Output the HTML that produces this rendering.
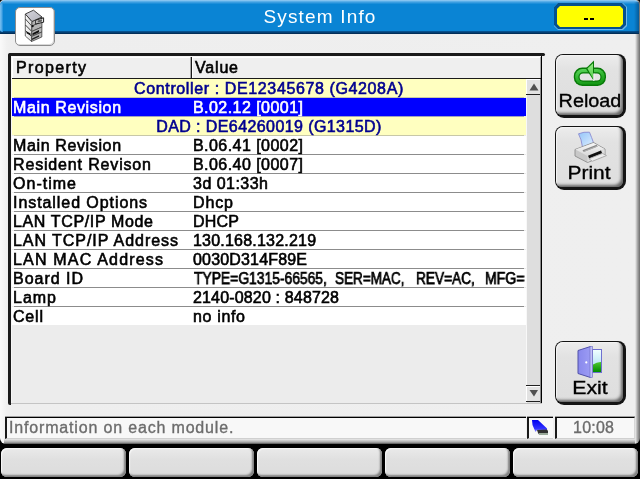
<!DOCTYPE html><html><head><meta charset="utf-8"><style>
*{margin:0;padding:0;box-sizing:border-box}
html,body{width:640px;height:479px;overflow:hidden;background:#000;font-family:"Liberation Sans",sans-serif}
div,span,svg{position:absolute}
.t{white-space:nowrap;-webkit-text-stroke:0.6px currentColor;will-change:transform}
</style></head><body>
<div style="left:0;top:0;width:640px;height:443px;background:#000"></div>
<div style="left:0;top:0;width:640px;height:444px;border-radius:4px 4px 6px 6px;background:linear-gradient(90deg,#fafafa 0,#f0f0f0 7px,#eeeeee 12px,#efefef 635px,#d4d4d4 636px,#a8a8a8 637.5px,#6c6c6c 640px)"></div>
<div style="left:4px;top:438px;width:631px;height:6px;background:linear-gradient(#f4f4f4,#e0e0e0 25%,#a8a8a8 70%,#505050)"></div>
<div style="left:0;top:0;width:639px;height:34px;border-radius:5px 5px 0 0;background:linear-gradient(#9ccef4 0,#5aaee8 1.5px,#2a94dc 3px,#0a84d4 4.5px,#0a84d4 31px,#05508e 31.5px,#022e58 33.5px,#8a96a0 34px)"></div>
<div style="left:0;top:3px;width:3px;height:29px;border-radius:3px 0 0 3px;background:linear-gradient(90deg,#7cc0f0,#4ea8e6 60%,#1a8ad8)"></div>
<div style="left:634px;top:2px;width:5px;height:30px;background:linear-gradient(90deg,rgba(0,0,0,0),rgba(0,40,80,.45))"></div>
<div class="t" style="left:0;top:5px;width:640px;text-align:center;color:#fff;font-size:19px;line-height:24px;-webkit-text-stroke:0px #fff;letter-spacing:1.17px">System Info</div>
<div style="left:15px;top:7px;width:40px;height:39px;background:#fff;border:1px solid #8c8c8c;border-radius:5px;box-shadow:inset -1px -1px 0 #d8d8d8"></div>
<svg style="left:22px;top:8px" width="26" height="38" viewBox="0 0 26 38">
<defs><linearGradient id="lf" x1="0" y1="0" x2="1" y2="0"><stop offset="0" stop-color="#fafafa"/><stop offset="1" stop-color="#d8d8d8"/></linearGradient>
<linearGradient id="tf" x1="0" y1="0" x2="1" y2="1"><stop offset="0" stop-color="#d4d4dc"/><stop offset="1" stop-color="#b4b4bc"/></linearGradient></defs>
<polygon points="3.30,6.00 10.00,13.50 9.88,18.10 3.30,11.06" fill="url(#lf)" stroke="#404040" stroke-width="0.8"/>
<polygon points="10.00,13.50 20.00,9.00 19.95,13.60 9.88,18.10" fill="#b4b4b4" stroke="#404040" stroke-width="0.8"/>
<polygon points="3.30,11.06 9.88,18.10 9.75,23.50 3.30,17.00" fill="url(#lf)" stroke="#404040" stroke-width="0.8"/>
<polygon points="9.88,18.10 19.95,13.60 19.90,19.00 9.75,23.50" fill="#b4b4b4" stroke="#404040" stroke-width="0.8"/>
<polygon points="3.30,17.00 9.75,23.50 9.62,28.50 3.30,22.50" fill="url(#lf)" stroke="#404040" stroke-width="0.8"/>
<polygon points="9.75,23.50 19.90,19.00 19.85,24.00 9.62,28.50" fill="#b4b4b4" stroke="#404040" stroke-width="0.8"/>
<polygon points="3.30,22.50 9.62,28.50 9.50,33.50 3.30,28.00" fill="url(#lf)" stroke="#404040" stroke-width="0.8"/>
<polygon points="9.62,28.50 19.85,24.00 19.80,29.00 9.50,33.50" fill="#b4b4b4" stroke="#404040" stroke-width="0.8"/>
<polygon points="3.30,6.00 11.50,2.20 20.00,9.00 10.00,13.50" fill="url(#tf)" stroke="#303030" stroke-width="0.9"/>
<polygon points="13.7,12.2 21.6,9.8 21.6,14.2 13.7,16" fill="#e4e4e4" stroke="#202020" stroke-width="1"/>
<polygon points="15.5,12.6 20,11.3 20,13.6 15.5,14.8" fill="#606060"/>
<circle cx="10.6" cy="18.2" r="1.1" fill="#101010"/>
<polygon points="4.5,23.2 8.5,25.6 8.5,27.6 4.5,25.2" fill="#101010"/>
<polygon points="10.5,25.2 17,22 17,24.2 10.5,27.2" fill="#101010"/>
<polygon points="10,30.5 17,27.2 17,28.8 10,32" fill="#202020"/>
</svg>
<div style="left:554px;top:3px;width:73px;height:27px;background:#6cb8ee;clip-path:polygon(4px 0,69px 0,73px 4px,73px 23px,69px 27px,4px 27px,0 23px,0 4px)"></div>
<div style="left:554px;top:3px;width:72px;height:26px;background:#04508e;clip-path:polygon(4px 0,68px 0,72px 4px,72px 22px,68px 26px,4px 26px,0 22px,0 4px)"></div>
<div style="left:557px;top:6px;width:66px;height:21px;background:#ffff00;clip-path:polygon(3px 0,63px 0,66px 3px,66px 18px,63px 21px,3px 21px,0 18px,0 3px)"></div>
<div style="left:584px;top:18px;width:4px;height:2px;background:#000"></div>
<div style="left:590px;top:18px;width:4px;height:2px;background:#000"></div>
<div style="left:8px;top:53px;width:537px;height:3px;border-radius:3px 2px 2px 0;background:#1a1a1a"></div>
<div style="left:8px;top:53px;width:3px;height:352px;border-radius:3px 0 0 2px;background:#1a1a1a"></div>
<div style="left:11px;top:56px;width:530px;height:347px;background:#f6f6f6"></div>
<div style="left:12px;top:57px;width:528px;height:346px;background:#ececec"></div>
<div style="left:541px;top:56px;width:1px;height:347px;background:#000"></div>
<div style="left:11px;top:403px;width:531px;height:1px;background:#c4c4c4"></div>
<div style="left:12px;top:57px;width:529px;height:21px;background:#efefef;border-top:1px solid #fff;border-left:1px solid #fff"></div>
<div style="left:190px;top:57px;width:1px;height:21px;background:#a8a8a8"></div>
<div style="left:191px;top:57px;width:1px;height:21px;background:#1a1a1a"></div>
<div style="left:192px;top:58px;width:1px;height:20px;background:#fff"></div>
<div style="left:540px;top:57px;width:1px;height:21px;background:#a8a8a8"></div>
<div style="left:12px;top:78px;width:529px;height:1px;background:#1a1a1a"></div>
<div class="t" style="left:16px;top:59px;font-size:16px;line-height:18px;color:#000;letter-spacing:1.36px">Property</div>
<div class="t" style="left:195px;top:59px;font-size:16px;line-height:18px;color:#000;letter-spacing:0.82px">Value</div>
<div style="left:12px;top:79px;width:514px;height:18px;background:#ffffc0"></div>
<div style="left:14px;top:97px;width:510px;height:1px;background:#c8c8a8"></div>
<div class="t" style="left:12px;top:80px;width:514px;text-align:center;font-size:16px;line-height:18px;color:#000090;letter-spacing:0.62px">Controller : DE12345678 (G4208A)</div>
<div style="left:12px;top:98px;width:514px;height:18px;background:#0000ff"></div>
<div style="left:14px;top:116px;width:510px;height:1px;background:#a0a0c0"></div>
<div class="t" style="left:13px;top:99px;font-size:16px;line-height:18px;color:#ffffff;letter-spacing:0.63px">Main Revision</div>
<div class="t" style="left:193px;top:99px;font-size:16px;line-height:18px;color:#ffffff;letter-spacing:0.45px">B.02.12 [0001]</div>
<div style="left:12px;top:117px;width:514px;height:18px;background:#ffffc0"></div>
<div style="left:14px;top:135px;width:510px;height:1px;background:#c8c8a8"></div>
<div class="t" style="left:12px;top:118px;width:514px;text-align:center;font-size:16px;line-height:18px;color:#000090;letter-spacing:0.41px">DAD : DE64260019 (G1315D)</div>
<div style="left:12px;top:136px;width:514px;height:18px;background:#ffffff"></div>
<div style="left:14px;top:154px;width:510px;height:1px;background:#8c8c8c"></div>
<div class="t" style="left:13px;top:137px;font-size:16px;line-height:18px;color:#000000;letter-spacing:0.63px">Main Revision</div>
<div class="t" style="left:193px;top:137px;font-size:16px;line-height:18px;color:#000000;letter-spacing:0.45px">B.06.41 [0002]</div>
<div style="left:12px;top:155px;width:514px;height:18px;background:#ffffff"></div>
<div style="left:14px;top:173px;width:510px;height:1px;background:#8c8c8c"></div>
<div class="t" style="left:13px;top:156px;font-size:16px;line-height:18px;color:#000000;letter-spacing:0.84px">Resident Revison</div>
<div class="t" style="left:193px;top:156px;font-size:16px;line-height:18px;color:#000000;letter-spacing:0.45px">B.06.40 [0007]</div>
<div style="left:12px;top:174px;width:514px;height:18px;background:#ffffff"></div>
<div style="left:14px;top:192px;width:510px;height:1px;background:#8c8c8c"></div>
<div class="t" style="left:13px;top:175px;font-size:16px;line-height:18px;color:#000000;letter-spacing:1.02px">On-time</div>
<div class="t" style="left:193px;top:175px;font-size:16px;line-height:18px;color:#000000;letter-spacing:0.48px">3d 01:33h</div>
<div style="left:12px;top:193px;width:514px;height:18px;background:#ffffff"></div>
<div style="left:14px;top:211px;width:510px;height:1px;background:#8c8c8c"></div>
<div class="t" style="left:13px;top:194px;font-size:16px;line-height:18px;color:#000000;letter-spacing:0.93px">Installed Options</div>
<div class="t" style="left:193px;top:194px;font-size:16px;line-height:18px;color:#000000;letter-spacing:0.88px">Dhcp</div>
<div style="left:12px;top:212px;width:514px;height:18px;background:#ffffff"></div>
<div style="left:14px;top:230px;width:510px;height:1px;background:#8c8c8c"></div>
<div class="t" style="left:13px;top:213px;font-size:16px;line-height:18px;color:#000000;letter-spacing:0.64px">LAN TCP/IP Mode</div>
<div class="t" style="left:193px;top:213px;font-size:16px;line-height:18px;color:#000000;letter-spacing:0.22px">DHCP</div>
<div style="left:12px;top:231px;width:514px;height:18px;background:#ffffff"></div>
<div style="left:14px;top:249px;width:510px;height:1px;background:#8c8c8c"></div>
<div class="t" style="left:13px;top:232px;font-size:16px;line-height:18px;color:#000000;letter-spacing:0.95px">LAN TCP/IP Address</div>
<div class="t" style="left:193px;top:232px;font-size:16px;line-height:18px;color:#000000;letter-spacing:0.21px">130.168.132.219</div>
<div style="left:12px;top:250px;width:514px;height:18px;background:#ffffff"></div>
<div style="left:14px;top:268px;width:510px;height:1px;background:#8c8c8c"></div>
<div class="t" style="left:13px;top:251px;font-size:16px;line-height:18px;color:#000000;letter-spacing:1.19px">LAN MAC Address</div>
<div class="t" style="left:193px;top:251px;font-size:16px;line-height:18px;color:#000000;letter-spacing:0.17px">0030D314F89E</div>
<div style="left:12px;top:269px;width:514px;height:18px;background:#ffffff"></div>
<div style="left:14px;top:287px;width:510px;height:1px;background:#8c8c8c"></div>
<div class="t" style="left:13px;top:270px;font-size:16px;line-height:18px;color:#000000;letter-spacing:0.98px">Board ID</div>
<div style="left:193px;top:269px;width:333px;height:18px;overflow:hidden">
<div class="t" style="left:0.5px;top:1px;font-size:16px;line-height:18px;color:#000000;transform-origin:0 0;transform:scaleX(0.866);-webkit-text-stroke:0.75px #000000">TYPE=G1315-66565,</div>
<div class="t" style="left:142.0px;top:1px;font-size:16px;line-height:18px;color:#000000;transform-origin:0 0;transform:scaleX(0.845);-webkit-text-stroke:0.75px #000000">SER=MAC,</div>
<div class="t" style="left:223.0px;top:1px;font-size:16px;line-height:18px;color:#000000;transform-origin:0 0;transform:scaleX(0.853);-webkit-text-stroke:0.75px #000000">REV=AC,</div>
<div class="t" style="left:291.5px;top:1px;font-size:16px;line-height:18px;color:#000000;transform-origin:0 0;transform:scaleX(0.88);-webkit-text-stroke:0.75px #000000">MFG=</div>
</div>
<div style="left:12px;top:288px;width:514px;height:18px;background:#ffffff"></div>
<div style="left:14px;top:306px;width:510px;height:1px;background:#8c8c8c"></div>
<div class="t" style="left:13px;top:289px;font-size:16px;line-height:18px;color:#000000;letter-spacing:0.99px">Lamp</div>
<div class="t" style="left:193px;top:289px;font-size:16px;line-height:18px;color:#000000;letter-spacing:0.16px">2140-0820 : 848728</div>
<div style="left:12px;top:307px;width:514px;height:18px;background:#ffffff"></div>
<div class="t" style="left:13px;top:308px;font-size:16px;line-height:18px;color:#000000;letter-spacing:0.81px">Cell</div>
<div class="t" style="left:193px;top:308px;font-size:16px;line-height:18px;color:#000000;letter-spacing:0.66px">no info</div>
<div style="left:526px;top:79px;width:15px;height:324px;background:#dedede;border-left:1px solid #f8f8f8"></div>
<div style="left:526px;top:79px;width:15px;height:15px;background:#e2e2e2;border-top:1px solid #fff;border-left:1px solid #fff"></div>
<div style="left:526px;top:94px;width:15px;height:1px;background:#202020"></div>
<svg style="left:526px;top:79px" width="15" height="15"><polygon points="3.5,11.5 12.5,11.5 8,4.5" fill="#505050"/></svg>
<div style="left:526px;top:385px;width:15px;height:1px;background:#202020"></div>
<div style="left:526px;top:386px;width:15px;height:15px;background:#e2e2e2;border-top:1px solid #fff;border-left:1px solid #fff"></div>
<div style="left:526px;top:401px;width:15px;height:1px;background:#202020"></div>
<svg style="left:526px;top:386px" width="15" height="15"><polygon points="3.5,4 12,4 8,10.5" fill="#505050"/></svg>
<div style="left:540px;top:79px;width:1px;height:324px;background:#8a8a8a"></div>
<div style="left:555px;top:54px;width:71px;height:64px;border-radius:8px 8px 9px 9px;background:#141414"></div>
<div style="left:556px;top:55px;width:67px;height:60px;border-radius:7px 7px 6px 6px;background:linear-gradient(#ececec,#e2e2e2 25%,#dedede);box-shadow:inset -3px -3px 3px -1px rgba(0,0,0,.55), inset 1px 1px 1px #f4f4f4"></div>
<div class="t" style="left:539.5px;top:91px;width:100px;text-align:center;font-size:18px;line-height:20px;color:#000;-webkit-text-stroke:0.35px #000;transform:scaleX(1.1);transform-origin:50px 0">Reload</div>
<svg style="left:570px;top:56px" width="40" height="34" viewBox="0 0 40 34">
<defs><linearGradient id="rg" x1="0" y1="0" x2="0.3" y2="1"><stop offset="0" stop-color="#60d860"/><stop offset="0.5" stop-color="#34b834"/><stop offset="1" stop-color="#169a16"/></linearGradient>
<linearGradient id="ag" x1="0" y1="0" x2="0" y2="1"><stop offset="0" stop-color="#90ec80"/><stop offset="1" stop-color="#58cc50"/></linearGradient></defs>
<rect x="3.8" y="11.6" width="32.2" height="18.4" rx="8.5" fill="#077a07"/>
<rect x="5.2" y="13" width="29.4" height="15.6" rx="7.3" fill="url(#rg)"/>
<rect x="8.4" y="16.3" width="23.2" height="9.4" rx="4.6" fill="#077a07"/>
<rect x="9.6" y="17.5" width="20.8" height="7" rx="3.5" fill="#e4e4e4"/>
<polygon points="24,4.6 15.8,12.4 24,25.2" fill="#077a07"/>
<polygon points="23,7.2 17.4,12.6 23,22.6" fill="url(#ag)"/>
<rect x="23.2" y="17.5" width="1.2" height="7.5" fill="#f6f6f6"/>
</svg>
<div style="left:555px;top:126px;width:71px;height:64px;border-radius:8px 8px 9px 9px;background:#141414"></div>
<div style="left:556px;top:127px;width:67px;height:60px;border-radius:7px 7px 6px 6px;background:linear-gradient(#ececec,#e2e2e2 25%,#dedede);box-shadow:inset -3px -3px 3px -1px rgba(0,0,0,.55), inset 1px 1px 1px #f4f4f4"></div>
<div class="t" style="left:539.4px;top:163px;width:100px;text-align:center;font-size:18px;line-height:20px;color:#000;-webkit-text-stroke:0.35px #000;transform:scaleX(1.16);transform-origin:50px 0">Print</div>
<svg style="left:570px;top:128px" width="40" height="38" viewBox="0 0 40 38">
<defs><linearGradient id="pg" x1="0" y1="0" x2="1" y2="1"><stop offset="0" stop-color="#94c4f8"/><stop offset="1" stop-color="#e0f0ff"/></linearGradient>
<linearGradient id="bg1" x1="0" y1="0" x2="0" y2="1"><stop offset="0" stop-color="#f8f8f8"/><stop offset="1" stop-color="#d8d8d8"/></linearGradient></defs>
<path d="M8.5,5.8 Q14,3.6 19.5,4.2 Q21.5,9 24,16.2 L12.6,19.6 Q11.5,11 8.5,5.8 Z" fill="url(#pg)" stroke="#8a8ad0" stroke-width="0.9"/>
<polygon points="5,21.5 23.5,14.5 35,21 35,27.5 17.5,34.5 5,28" fill="#c8c8c8" stroke="#8c8c8c" stroke-width="0.9"/>
<polygon points="17.5,28.2 34.6,21.3 34.6,27.3 17.5,34" fill="#dedede"/>
<polygon points="5.5,21.6 23.5,14.9 34.5,21.1 17.3,28" fill="url(#bg1)"/>
<polygon points="12.5,22.2 26.5,16.8 27.8,18.6 13.8,24" fill="#8a8a8a"/>
<polygon points="14,22.9 26.8,18 27.2,18.6 14.4,23.5" fill="#c0c0c0"/>
<polygon points="18,27.8 31,22.6 32.2,25.2 19.2,30.4" fill="#101010"/>
<polygon points="18.8,30.8 32.5,25.4 36.5,27.6 22.5,33.2" fill="#ececec" stroke="#a0a0a0" stroke-width="0.8"/>
</svg>
<div style="left:555px;top:341px;width:71px;height:64px;border-radius:8px 8px 9px 9px;background:#141414"></div>
<div style="left:556px;top:342px;width:67px;height:60px;border-radius:7px 7px 6px 6px;background:linear-gradient(#ececec,#e2e2e2 25%,#dedede);box-shadow:inset -3px -3px 3px -1px rgba(0,0,0,.55), inset 1px 1px 1px #f4f4f4"></div>
<div class="t" style="left:540px;top:378px;width:100px;text-align:center;font-size:18px;line-height:20px;color:#000;-webkit-text-stroke:0.35px #000;transform:scaleX(1.18);transform-origin:50px 0">Exit</div>
<svg style="left:576px;top:344px" width="30" height="36" viewBox="0 0 30 36">
<defs><linearGradient id="dg" x1="0" y1="0" x2="1" y2="0"><stop offset="0" stop-color="#8888ec"/><stop offset="1" stop-color="#9c9cf4"/></linearGradient>
<linearGradient id="sk" x1="0" y1="0" x2="0" y2="1"><stop offset="0" stop-color="#f0ffff"/><stop offset="1" stop-color="#a0d8f0"/></linearGradient>
<linearGradient id="gr" x1="0" y1="0" x2="0" y2="1"><stop offset="0" stop-color="#50c830"/><stop offset="1" stop-color="#008a00"/></linearGradient></defs>
<rect x="15.5" y="5" width="10.5" height="24" fill="#7070d0"/>
<rect x="17" y="6" width="8" height="22" fill="url(#sk)"/>
<path d="M17 20.5 Q21 17.8 25 18 L25 28 L17 28 Z" fill="url(#gr)"/>
<polygon points="2,6.5 14.5,2.5 14.5,33.5 2,29.5" fill="url(#dg)" stroke="#5050a8" stroke-width="1"/>
<rect x="14" y="2.5" width="2.5" height="31" fill="#c0c0f8" stroke="#6a6ac0" stroke-width="0.6"/>
<circle cx="10.3" cy="18.4" r="1.1" fill="#fff"/>
</svg>
<div style="left:5px;top:417px;width:521px;height:22px;background:#f8f8f8;box-shadow:0 -1px 0 #a0a0a0;border-top:1px solid #000;border-left:2px solid #1a1a1a;border-bottom:1px solid #d0d0d0"></div>
<div class="t" style="left:9px;top:419px;font-size:16px;line-height:18px;color:#6c6c6c;-webkit-text-stroke:0.35px #6c6c6c;letter-spacing:0.83px">Information on each module.</div>
<div style="left:527px;top:417px;width:26px;height:22px;background:#f8f8f8;box-shadow:0 -1px 0 #a0a0a0;border-top:1px solid #000;border-left:2px solid #1a1a1a;border-bottom:1px solid #d0d0d0"></div>
<svg style="left:526px;top:414px" width="30" height="26" viewBox="0 0 30 26">
<defs><linearGradient id="ug" x1="0" y1="0" x2="0" y2="1"><stop offset="0" stop-color="#0000f0"/><stop offset="0.7" stop-color="#3030ff"/><stop offset="1" stop-color="#9090ff"/></linearGradient></defs>
<polygon points="6,6 12,6 21,14.5 21,16 11,16 9.5,18 6.5,11" fill="url(#ug)"/>
<polygon points="11,16 21,15.5 22,17 22,20.5 13,20.5 12,19" fill="#303030"/>
<rect x="13" y="19" width="9" height="2" fill="#9aaa9a"/>
</svg>
<div style="left:555px;top:417px;width:80px;height:22px;background:#f8f8f8;box-shadow:0 -1px 0 #a0a0a0;border-top:1px solid #000;border-left:2px solid #1a1a1a;border-bottom:1px solid #d0d0d0;border-right:1px solid #d8d8d8"></div>
<div class="t" style="left:573px;top:419px;font-size:16px;line-height:18px;color:#6c6c6c;-webkit-text-stroke:0.35px #6c6c6c;letter-spacing:0.24px">10:08</div>
<div style="left:1px;top:448px;width:125px;height:29px;border-radius:6px;background:linear-gradient(#eaeaea,#e0e0e0 40%,#dcdcdc);box-shadow:inset -2px -2px 2px #808080, inset 1px 1px 1px #f8f8f8"></div>
<div style="left:129px;top:448px;width:125px;height:29px;border-radius:6px;background:linear-gradient(#eaeaea,#e0e0e0 40%,#dcdcdc);box-shadow:inset -2px -2px 2px #808080, inset 1px 1px 1px #f8f8f8"></div>
<div style="left:257px;top:448px;width:125px;height:29px;border-radius:6px;background:linear-gradient(#eaeaea,#e0e0e0 40%,#dcdcdc);box-shadow:inset -2px -2px 2px #808080, inset 1px 1px 1px #f8f8f8"></div>
<div style="left:385px;top:448px;width:125px;height:29px;border-radius:6px;background:linear-gradient(#eaeaea,#e0e0e0 40%,#dcdcdc);box-shadow:inset -2px -2px 2px #808080, inset 1px 1px 1px #f8f8f8"></div>
<div style="left:513px;top:448px;width:125px;height:29px;border-radius:6px;background:linear-gradient(#eaeaea,#e0e0e0 40%,#dcdcdc);box-shadow:inset -2px -2px 2px #808080, inset 1px 1px 1px #f8f8f8"></div>
</body></html>
